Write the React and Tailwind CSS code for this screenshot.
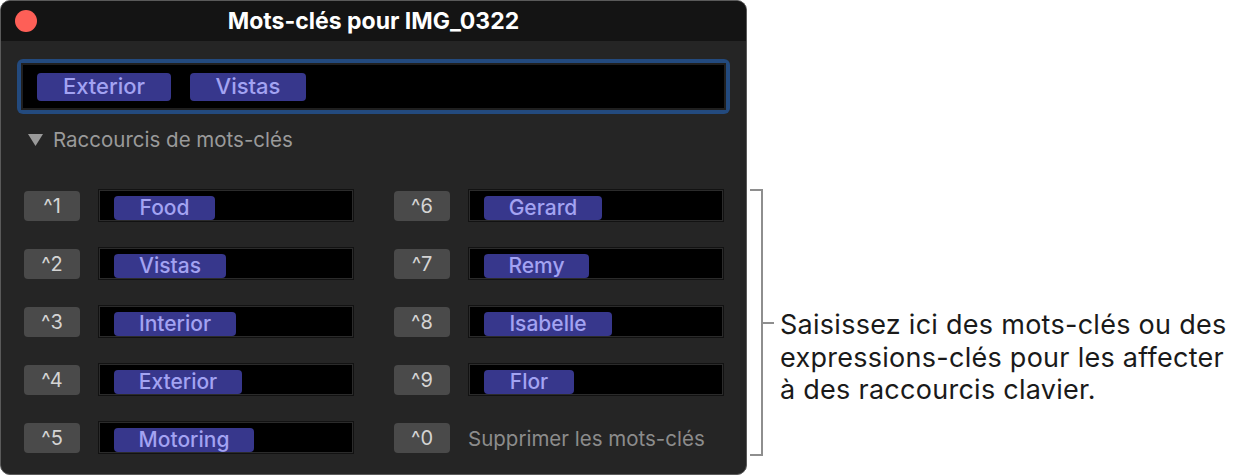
const left = [
  { key: '^1', word: 'Food', w: 'w-[101px]' },
  { key: '^2', word: 'Vistas', w: 'w-[112px]' },
  { key: '^3', word: 'Interior', w: 'w-[122px]' },
  { key: '^4', word: 'Exterior', w: 'w-[128px]' },
  { key: '^5', word: 'Motoring', w: 'w-[140px]' },
]

const right = [
  { key: '^6', word: 'Gerard', w: 'w-[118px]' },
  { key: '^7', word: 'Remy', w: 'w-[105px]' },
  { key: '^8', word: 'Isabelle', w: 'w-[128px]' },
  { key: '^9', word: 'Flor', w: 'w-[90px]' },
  { key: '^0', word: null },
]

function KeyCap({ label }) {
  return (
    <div className="w-[56px] h-[30px] shrink-0 rounded-[4px] bg-[#4a4a4a] text-[#d4d4d4] text-[20px] flex items-center justify-center">
      {label}
    </div>
  )
}

function Token({ word, w, tall }) {
  return (
    <div className={`${w} ${tall ? 'h-[28px] text-[22px]' : 'h-[24px] text-[21px]'} rounded-[4px] bg-[#37378c] text-[#a3a3f2] font-medium flex items-center justify-center`}>
      {word}
    </div>
  )
}

function ShortcutRow({ item }) {
  return (
    <div className="flex items-center h-[33px]">
      <KeyCap label={item.key} />
      {item.word ? (
        <div className="ml-[18px] w-[256px] h-[33px] bg-black border border-[#121212] shadow-[inset_0_0_0_1px_#2b2b2b] pl-[15px] pt-[6px]">
          <Token word={item.word} w={item.w} />
        </div>
      ) : (
        <span className="ml-[18px] mt-[3px] text-[20.5px] text-[#8c8c8c]">Supprimer les mots-clés</span>
      )}
    </div>
  )
}

export default function App() {
  return (
    <div className="flex bg-white w-[1253px] h-[476px] font-['Inter','Liberation_Sans',sans-serif]">
      {/* Window */}
      <div className="w-[747px] h-[475px] shrink-0 rounded-[10px] overflow-hidden border border-[#5a5a5a] bg-[#252525] flex flex-col">
        {/* Title bar */}
        <div className="h-[40px] shrink-0 bg-[#141414] flex items-center relative">
          <div className="absolute left-[14px] top-[9px] w-[22px] h-[22px] rounded-full bg-[#fe5f57]" />
          <h1 className="w-full text-center text-white font-bold text-[23px]">Mots-clés pour IMG_0322</h1>
        </div>

        <div className="px-[16px] pt-[18px]">
          {/* Keyword field */}
          <div className="w-[713px] h-[55px] rounded-[6px] bg-[#234a7e] p-[4px]">
            <div className="h-full bg-black border-2 border-[#1f1f1f] flex items-center gap-[19px] pl-[14px]">
              <Token word="Exterior" w="w-[134px]" tall />
              <Token word="Vistas" w="w-[116px]" tall />
            </div>
          </div>

          {/* Disclosure */}
          <div className="mt-[14px] h-[24px] flex items-center pl-[11px] text-[#9a9a9a] text-[20.5px]">
            <svg width="15" height="12" viewBox="0 0 15 12" className="mr-[10px]">
              <path d="M0 0 H15 L7.5 12 Z" fill="#9a9a9a" />
            </svg>
            Raccourcis de mots-clés
          </div>

          {/* Shortcuts */}
          <div className="mt-[37px] pl-[7px] flex gap-[40px]">
            <div className="flex flex-col gap-[25px]">
              {left.map(item => <ShortcutRow key={item.key} item={item} />)}
            </div>
            <div className="flex flex-col gap-[25px]">
              {right.map(item => <ShortcutRow key={item.key} item={item} />)}
            </div>
          </div>
        </div>
      </div>

      {/* Callout */}
      <div className="flex items-start pt-[189px] pl-[3px]">
        <div className="w-[13px] h-[267px] border-y-2 border-r-2 border-[#8e8e8e]" />
        <div className="flex items-start mt-[120px]">
          <div className="w-[11px] h-[2px] bg-[#8e8e8e] mt-[13px]" />
          <p className="ml-[6px] text-[27px] leading-[32.5px] tracking-[0.01em] text-[#1a1a1a] whitespace-nowrap">
            Saisissez ici des mots-clés ou des<br />
            expressions-clés pour les affecter<br />
            à des raccourcis clavier.
          </p>
        </div>
      </div>
    </div>
  )
}
